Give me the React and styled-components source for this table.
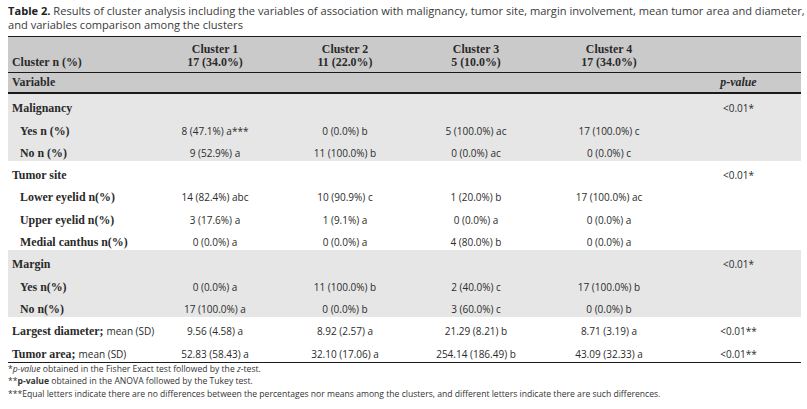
import React from 'react'
import styled, { createGlobalStyle } from 'styled-components'

const GlobalStyle = createGlobalStyle`
  html, body {
    margin: 0;
    padding: 0;
    background: #fff;
  }
`

const Page = styled.div`
  width: 807px;
  height: 409px;
  padding: 4px 7px 0 8px;
  box-sizing: border-box;
  overflow: hidden;
  color: #2b2b2b;
`

const Caption = styled.p`
  margin: 0 0 4px;
  font-family: "Open Sans", sans-serif;
  font-size: 11.1px;
  line-height: 14px;
  color: #3a3a3a;
  white-space: nowrap;
  b {
    font-weight: 700;
    color: #222;
  }
`

const Table = styled.table`
  width: 793px;
  border-collapse: collapse;
  table-layout: fixed;
  border-top: 1.5px solid #1a1a1a;
  border-bottom: 1.5px solid #1a1a1a;
`

const HeadRow = styled.tr`
  background: #cacaca;
  border-bottom: ${p => (p.$thick ? '2px' : '1px')} solid #1a1a1a;
`

const BodyRow = styled.tr`
  background: ${p => (p.$shade ? '#e6e6e6' : '#fff')};
`

const Label = styled.td`
  font-family: "Liberation Serif", serif;
  font-weight: 700;
  font-size: 11.9px;
  line-height: 14px;
  height: 21.3px;
  color: #2a2a2a;
  padding: 0 0 1px ${p => (p.$sub ? '12px' : '4px')};
  text-align: left;
  white-space: nowrap;
  vertical-align: bottom;
  span {
    font-family: "Open Sans", sans-serif;
    font-weight: 400;
    font-size: 10px;
  }
`

const HeadCell = styled.th`
  font-family: "Liberation Serif", serif;
  font-weight: 700;
  font-size: 11.9px;
  line-height: 13px;
  color: #2a2a2a;
  text-align: ${p => (p.$left ? 'left' : 'center')};
  padding: ${p => (p.$left ? '0 0 0 4px' : '0')};
  vertical-align: ${p => (p.$bottom ? 'bottom' : 'middle')};
  padding-bottom: ${p => (p.$bottom ? '3px' : '0')};
  height: ${p => p.$h || 'auto'};
  i {
    font-style: italic;
  }
`

const Cell = styled.td`
  font-family: "Open Sans", sans-serif;
  font-size: 10px;
  line-height: 14px;
  color: #2b2b2b;
  text-align: center;
  padding: 0 0 1px;
  vertical-align: bottom;
  white-space: nowrap;
`

const Notes = styled.div`
  padding-top: 0;
  font-family: "Open Sans", sans-serif;
  font-size: 8.6px;
  line-height: 12.5px;
  color: #333;
  p {
    margin: 0;
  }
`

const groups = [
  {
    title: 'Malignancy',
    p: '<0.01*',
    shade: true,
    rows: [
      ['Yes n (%)', '8 (47.1%) a***', '0 (0.0%) b', '5 (100.0%) ac', '17 (100.0%) c'],
      ['No n (%)', '9 (52.9%) a', '11 (100.0%) b', '0 (0.0%) ac', '0 (0.0%) c'],
    ],
  },
  {
    title: 'Tumor site',
    p: '<0.01*',
    shade: false,
    rows: [
      ['Lower eyelid n(%)', '14 (82.4%) abc', '10 (90.9%) c', '1 (20.0%) b', '17 (100.0%) ac'],
      ['Upper eyelid n(%)', '3 (17.6%) a', '1 (9.1%) a', '0 (0.0%) a', '0 (0.0%) a'],
      ['Medial canthus n(%)', '0 (0.0%) a', '0 (0.0%) a', '4 (80.0%) b', '0 (0.0%) a'],
    ],
  },
  {
    title: 'Margin',
    p: '<0.01*',
    shade: true,
    rows: [
      ['Yes n(%)', '0 (0.0%) a', '11 (100.0%) b', '2 (40.0%) c', '17 (100.0%) b'],
      ['No n(%)', '17 (100.0%) a', '0 (0.0%) b', '3 (60.0%) c', '0 (0.0%) b'],
    ],
  },
]

const means = [
  ['Largest diameter;', '9.56 (4.58) a', '8.92 (2.57) a', '21.29 (8.21) b', '8.71 (3.19) a', '<0.01**'],
  ['Tumor area;', '52.83 (58.43) a', '32.10 (17.06) a', '254.14 (186.49) b', '43.09 (32.33) a', '<0.01**'],
]

export default function App() {
  return (
    <Page>
      <GlobalStyle />
      <Caption>
        <b>Table 2.</b> Results of cluster analysis including the variables of association with malignancy, tumor site, margin involvement, mean tumor area and diameter,
        <br />
        and variables comparison among the clusters
      </Caption>
      <Table>
        <colgroup>
          <col style={{ width: 142 }} />
          <col style={{ width: 130 }} />
          <col style={{ width: 130 }} />
          <col style={{ width: 132 }} />
          <col style={{ width: 134 }} />
          <col style={{ width: 125 }} />
        </colgroup>
        <thead>
          <HeadRow>
            <HeadCell $left $bottom $h="32px">Cluster n (%)</HeadCell>
            <HeadCell $bottom>Cluster 1<br />17 (34.0%)</HeadCell>
            <HeadCell $bottom>Cluster 2<br />11 (22.0%)</HeadCell>
            <HeadCell $bottom>Cluster 3<br />5 (10.0%)</HeadCell>
            <HeadCell $bottom>Cluster 4<br />17 (34.0%)</HeadCell>
            <HeadCell $bottom />
          </HeadRow>
          <HeadRow $thick>
            <HeadCell $left $h="19px">Variable</HeadCell>
            <HeadCell />
            <HeadCell />
            <HeadCell />
            <HeadCell />
            <HeadCell><i>p-value</i></HeadCell>
          </HeadRow>
        </thead>
        <tbody>
          {groups.map(g => (
            <React.Fragment key={g.title}>
              <BodyRow $shade={g.shade}>
                <Label>{g.title}</Label>
                <Cell />
                <Cell />
                <Cell />
                <Cell />
                <Cell>{g.p}</Cell>
              </BodyRow>
              {g.rows.map(r => (
                <BodyRow key={r[0]} $shade={g.shade}>
                  <Label $sub>{r[0]}</Label>
                  {r.slice(1).map((v, i) => (
                    <Cell key={i}>{v}</Cell>
                  ))}
                  <Cell />
                </BodyRow>
              ))}
            </React.Fragment>
          ))}
          {means.map(r => (
            <BodyRow key={r[0]}>
              <Label>
                {r[0]} <span>mean (SD)</span>
              </Label>
              {r.slice(1).map((v, i) => (
                <Cell key={i}>{v}</Cell>
              ))}
            </BodyRow>
          ))}
        </tbody>
      </Table>
      <Notes>
        <p>*<i>p-value</i> obtained in the Fisher Exact test followed by the <i>z</i>-test.</p>
        <p>**<b>p-value</b> obtained in the ANOVA followed by the Tukey test.</p>
        <p>***Equal letters indicate there are no differences between the percentages nor means among the clusters, and different letters indicate there are such differences.</p>
      </Notes>
    </Page>
  )
}
